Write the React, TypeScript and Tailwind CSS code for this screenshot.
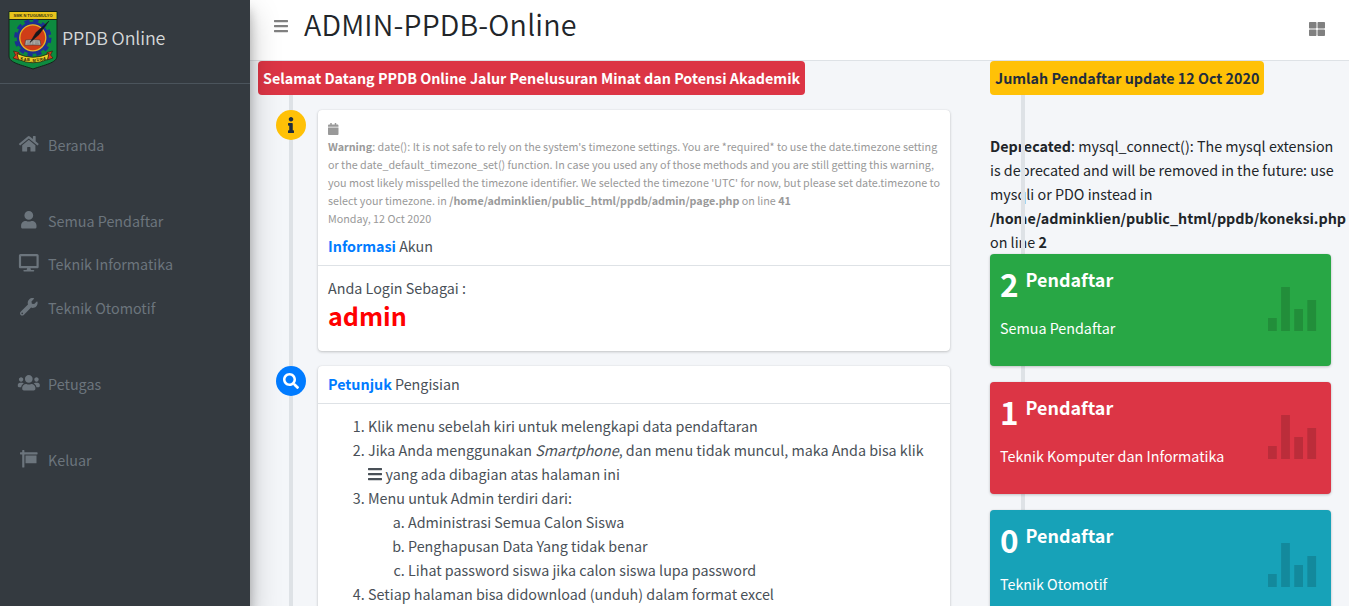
import React from "react";
import {
  FaBars,
  FaCalendar,
  FaDesktop,
  FaHome,
  FaInfo,
  FaSearch,
  FaSign,
  FaThLarge,
  FaUser,
  FaUsers,
  FaWrench,
} from "react-icons/fa";
import type { IconType } from "react-icons";

function SchoolCrest() {
  return (
    <svg className="h-[60px] w-[50px] shrink-0" viewBox="0 0 50 60">
      <path d="M1 1.5H49V46C49 53 36 55 25 59C14 55 1 53 1 46Z" fill="#0d8a3f" stroke="#14231a" strokeWidth="1" />
      <rect x="1.5" y="2" width="47" height="7.5" fill="#e9c31c" />
      <path d="M1 9.5H49" stroke="#1c2417" strokeWidth="1" />
      <text x="25" y="7.4" textAnchor="middle" fontSize="4.4" fontWeight="700" textLength="39" lengthAdjust="spacingAndGlyphs" fill="#3a3212" fontFamily="Liberation Sans, sans-serif">
        SMK N TUGUMULYO
      </text>
      <circle cx="24.8" cy="27.8" r="17.2" fill="none" stroke="#1d2f92" strokeWidth="3" strokeDasharray="5.2 3.8" />
      <circle cx="24.8" cy="27.8" r="16" fill="#1d2f92" />
      <circle cx="24.8" cy="27.8" r="13" fill="#cf3d18" stroke="#e8b428" strokeWidth="1.3" />
      <path d="M17.5 30L24.5 29.5L32 30L33 35.3L25 35L16.8 35.3Z" fill="#aaa9a4" stroke="#4b3330" strokeWidth="0.6" />
      <path d="M19 32H22.5M27 32H30.5M18.5 33.8H23M27 33.8H31M24.8 29.5V35" stroke="#77726e" strokeWidth="0.6" />
      <path d="M41 11L31 24.5L22 32.5L28 22.5Z" fill="#15171b" stroke="#15171b" strokeWidth="0.5" />
      <path d="M5.5 41L11 42.5V50L5 48L7.5 45ZM44.5 41L39 42.5V50L45 48L42.5 45Z" fill="#d6401d" stroke="#2a1710" strokeWidth="0.6" />
      <path d="M9 43.5Q25 51 41 43.5L39.5 49.5Q25 56 10.5 49.5Z" fill="#e9cf25" stroke="#27230e" strokeWidth="0.8" />
      <text
        x="12.5 15.8 19.1 22.4 24.6 28.5 31.9 35"
        y="49.6 50.5 51.2 51.6 51.6 51.3 50.6 49.7"
        fontSize="3.9"
        fontWeight="700"
        fill="#29240c"
        fontFamily="Liberation Sans, sans-serif"
      >
        KAB.MURA
      </text>
    </svg>
  );
}

function NavItem({ icon: Icon, label, className = "" }: { icon: IconType; label: string; className?: string }) {
  return (
    <a className={`flex h-10 items-center pl-4 text-[#6c757d] ${className}`}>
      <Icon className="mr-[6.5px] h-[17.6px] w-[25.6px] -translate-y-px" />
      <span className="whitespace-nowrap">{label}</span>
    </a>
  );
}

function Sidebar() {
  return (
    <aside className="relative z-20 flex w-[250px] shrink-0 flex-col bg-[#343a40] shadow-[0_14px_28px_rgba(0,0,0,0.25),0_10px_10px_rgba(0,0,0,0.22)]">
      <div className="flex h-[84px] shrink-0 items-start border-b border-[#4b545c] pl-2 pt-[10px]">
        <SchoolCrest />
        <span className="ml-1 mt-[12px] whitespace-nowrap text-[17.9px] font-[350] leading-[30px] tracking-[-0.13px] text-[#d6d8d9]">PPDB Online</span>
      </div>
      <nav className="flex flex-col pt-[41px]">
        <NavItem icon={FaHome} label="Beranda" />
        <NavItem icon={FaUser} label="Semua Pendaftar" className="mt-9" />
        <NavItem icon={FaDesktop} label="Teknik Informatika" className="mt-[3px]" />
        <NavItem icon={FaWrench} label="Teknik Otomotif" className="mt-1" />
        <NavItem icon={FaUsers} label="Petugas" className="mt-9" />
        <NavItem icon={FaSign} label="Keluar" className="mt-9" />
      </nav>
    </aside>
  );
}

function TopBar() {
  return (
    <header className="flex h-[61px] shrink-0 items-start border-b border-[#dee2e6] bg-white pl-[23px] pr-6">
      <FaBars className="mt-[18px] h-4 w-4 text-[#808080]" />
      <h1 className="ml-[15px] whitespace-nowrap text-[28.65px] font-[350] leading-[48px] tracking-[0.18px]">ADMIN-PPDB-Online</h1>
      <FaThLarge className="ml-auto mt-[21px] h-4 w-4 text-[#808080]" />
    </header>
  );
}

function TimelineEntry({ icon: Icon, badge, children }: { icon: IconType; badge: string; children: React.ReactNode }) {
  return (
    <div className="mb-[15px] flex items-start pl-[18px]">
      <div className={`z-10 flex h-[30px] w-[30px] shrink-0 items-center justify-center rounded-full ${badge}`}>
        <Icon className="h-4 w-4" />
      </div>
      <div className="ml-3 min-w-0 flex-1 rounded-[4px] bg-white text-[#495057] shadow-[0_0_1px_rgba(0,0,0,0.125),0_1px_3px_rgba(0,0,0,0.2)]">
        {children}
      </div>
    </div>
  );
}

function EntryTitle({ lead, rest }: { lead: string; rest: string }) {
  return (
    <h3 className="border-b border-[#dee2e6] px-[10px] pb-[11px] pt-[9px] leading-[17px]">
      <b className="text-[#007bff]">{lead}</b> {rest}
    </h3>
  );
}

function StatCard({ count, label, className }: { count: string; label: string; className: string }) {
  return (
    <div className={`relative mb-4 flex h-28 w-[341px] items-start justify-between rounded-[4px] pl-[10px] pr-[14px] text-white shadow-[0_0_1px_rgba(0,0,0,0.125),0_1px_3px_rgba(0,0,0,0.2)] ${className}`}>
      <div>
        <div className="flex h-[62px] items-start font-bold">
          <span className="mt-2 text-[31.5px] leading-[42px]">{count}</span>
          <span className="ml-[7px] mt-[13px] text-[17.9px] leading-6">Pendaftar</span>
        </div>
        <p className="whitespace-nowrap leading-6">{label}</p>
      </div>
      <svg className="mt-[33px] h-11 w-[49px]" viewBox="0 0 49 44" fill="rgba(0,0,0,0.15)">
        <rect x="0" y="31" width="8.8" height="13" />
        <rect x="13.1" y="0" width="8.8" height="44" />
        <rect x="26.2" y="22" width="8.8" height="22" />
        <rect x="39.3" y="13" width="8.8" height="31" />
      </svg>
    </div>
  );
}

export default function App() {
  return (
    <div className="flex h-[606px] w-[1349px] overflow-hidden bg-[#f4f6f9] font-['Noto_Sans_CJK_SC','Noto_Sans_CJK_JP',sans-serif] text-[14.325px] leading-6 text-[#212529]">
      <Sidebar />
      <div className="flex min-w-0 flex-1 flex-col">
        <TopBar />
        <main className="flex min-h-0 flex-1 items-start pl-2">
          <section className="relative w-[692px] shrink-0">
            <div className="absolute left-[31px] top-0 h-[600px] w-1 bg-[#dee2e6]" />
            <div className="relative mb-[15px] inline-block whitespace-nowrap rounded-[4px] bg-[#dc3545] px-[5px] py-[5px] align-top font-bold tracking-[-0.008px] text-white">
              Selamat Datang PPDB Online Jalur Penelusuran Minat dan Potensi Akademik
            </div>
            <TimelineEntry icon={FaInfo} badge="bg-[#ffc107] text-[#1f2d3d]">
              <div className="whitespace-nowrap px-[10px] pt-[10px] text-[10.75px] leading-[18px] text-[#999]">
                <FaCalendar className="mb-[3px] mt-[3px] h-3 w-[10.5px]" />
                <p><b>Warning</b>: date(): It is not safe to rely on the system's timezone settings. You are *required* to use the date.timezone setting</p>
                <p>or the date_default_timezone_set() function. In case you used any of those methods and you are still getting this warning,</p>
                <p>you most likely misspelled the timezone identifier. We selected the timezone 'UTC' for now, but please set date.timezone to</p>
                <p>select your timezone. in <b>/home/adminklien/public_html/ppdb/admin/page.php</b> on line <b>41</b></p>
                <p>Monday, 12 Oct 2020</p>
              </div>
              <EntryTitle lead="Informasi" rest="Akun" />
              <div className="p-[10px]">
                <p>Anda Login Sebagai :</p>
                <p className="mb-[11px] text-[25.07px] font-bold leading-[30px] text-[#ff0000]">admin</p>
              </div>
            </TimelineEntry>
            <TimelineEntry icon={FaSearch} badge="bg-[#007bff] text-white">
              <EntryTitle lead="Petunjuk" rest="Pengisian" />
              <div className="p-[10px]">
                <ol className="list-decimal whitespace-nowrap pl-10">
                  <li>Klik menu sebelah kiri untuk melengkapi data pendaftaran</li>
                  <li>
                    <span className="tracking-[-0.015px]">
                      Jika Anda menggunakan <i>Smartphone</i>, dan menu tidak muncul, maka Anda bisa klik
                    </span>
                    <br />
                    <FaBars className="-ml-px mr-[2.5px] inline h-4 w-4 align-[-2px]" />
                    yang ada dibagian atas halaman ini
                  </li>
                  <li>
                    Menu untuk Admin terdiri dari:
                    <ol className="list-[lower-alpha] pl-10">
                      <li>Administrasi Semua Calon Siswa</li>
                      <li>Penghapusan Data Yang tidak benar</li>
                      <li>Lihat password siswa jika calon siswa lupa password</li>
                    </ol>
                  </li>
                  <li>Setiap halaman bisa didownload (unduh) dalam format excel</li>
                </ol>
              </div>
            </TimelineEntry>
          </section>
          <section className="relative ml-10 w-[359px] shrink-0">
            <div className="whitespace-nowrap">
              <div className="relative z-10 mb-[39px] inline-block rounded-[4px] bg-[#ffc107] p-[5px] align-top font-bold text-[#1f2d3d]">
                Jumlah Pendaftar update 12 Oct 2020
              </div>
              <p><b>Deprecated</b>: mysql_connect(): The mysql extension</p>
              <p>is deprecated and will be removed in the future: use</p>
              <p>mysqli or PDO instead in</p>
              <p><b className="tracking-[-0.02px]">/home/adminklien/public_html/ppdb/koneksi.php</b></p>
              <p>on line <b>2</b></p>
            </div>
            <div className="absolute left-[31px] top-0 h-[600px] w-1 bg-[#dee2e6]" />
            <StatCard count="2" label="Semua Pendaftar" className="bg-[#28a745]" />
            <StatCard count="1" label="Teknik Komputer dan Informatika" className="bg-[#dc3545]" />
            <StatCard count="0" label="Teknik Otomotif" className="bg-[#17a2b8]" />
          </section>
        </main>
      </div>
    </div>
  );
}
